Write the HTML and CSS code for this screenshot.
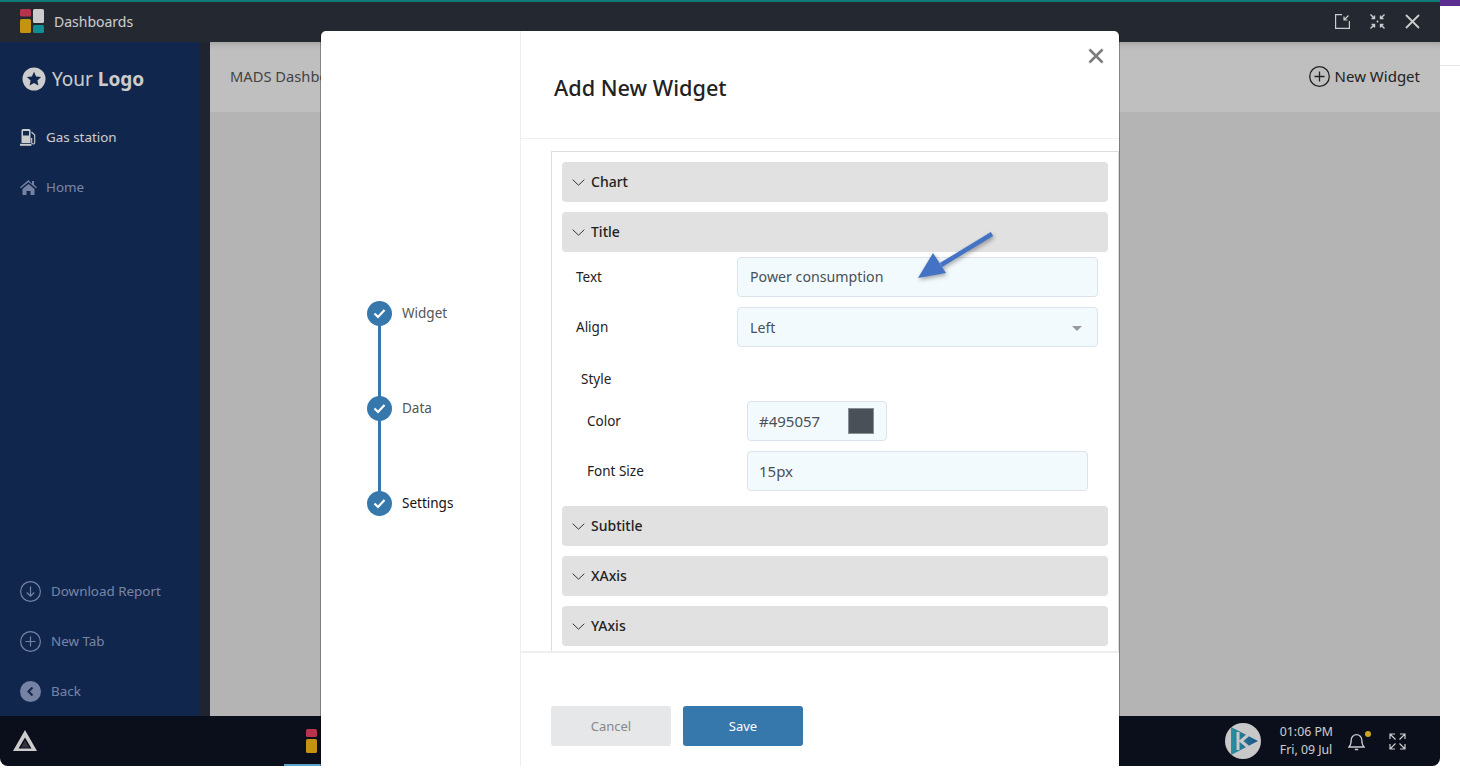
FILE: index.html
```html
<!DOCTYPE html>
<html lang="en">
<head>
<meta charset="UTF-8">
<title>Dashboards</title>
<link rel="stylesheet" href="styles.css">
</head>
<body>
<div class="page-edge"></div>
<div class="window">
    <header class="titlebar">
        <svg class="app-logo" width="24" height="24" viewBox="0 0 24 24">
            <rect x="0" y="0" width="11" height="7.5" rx="1.5" fill="#e6415f"/>
            <rect x="13" y="0" width="11" height="14" rx="1.5" fill="#fff"/>
            <rect x="0" y="10" width="11" height="14" rx="1.5" fill="#f5b816"/>
            <rect x="13" y="16" width="11" height="8" rx="1.5" fill="#13b3b9"/>
        </svg>
        <span class="app-name">Dashboards</span>
        <div class="window-actions">
            <svg width="15" height="15" viewBox="0 0 15 15" fill="none" stroke="#fff" stroke-width="1.2">
                <path d="M7 .6H.6v13.800h13.800V7"/>
                <path d="M13.500 1.500 9 6M9 2.500V6h3.500"/>
            </svg>
            <svg width="15" height="15" viewBox="0 0 15 15" fill="none" stroke="#fff" stroke-width="1.4">
                <path d="M.5.5l4 4M4.500 1.500v3h-3M14.500.5l-4 4M10.500 1.500v3h3M.5 14.500l4-4M4.500 13.500v-3h-3M14.500 14.500l-4-4M10.500 13.500v-3h3"/>
                <circle cx="7.500" cy="7.500" r="1" fill="#fff" stroke="none"/>
            </svg>
            <svg width="15" height="15" viewBox="0 0 15 15" fill="none" stroke="#fff" stroke-width="1.800">
                <path d="M1 1l13 13M14 1 1 14"/>
            </svg>
        </div>
    </header>

    <div class="workspace">
        <aside class="sidebar">
            <div class="brand">
                <svg width="24" height="24" viewBox="0 0 24 24">
                    <circle cx="12" cy="12" r="11.5" fill="#fff"/>
                    <path d="M12 4.800l2.100 4.600 5 .6-3.700 3.400 1 5L12 15.900l-4.400 2.500 1-5L4.900 10l5-.6z" fill="#163060"/>
                </svg>
                <span class="brand-text">Your <b>Logo</b></span>
            </div>
            <nav class="nav-top">
                <a class="nav-item active">
                    <svg width="17" height="17" viewBox="0 0 17 17" fill="#fff">
                        <path d="M1.500 1.500A1.500 1.500 0 0 1 3 0h6a1.500 1.500 0 0 1 1.500 1.500V14h-9zM3 2v4.500h6V2z"/>
                        <rect x="0" y="14.800" width="11.500" height="2"/>
                        <path d="M11.500 3l3.200 3v7.500a1.500 1.500 0 0 1-3 0V9.500h-1" fill="none" stroke="#fff" stroke-width="1.100"/>
                    </svg>
                    <span>Gas station</span>
                </a>
                <a class="nav-item">
                    <svg width="17" height="15" viewBox="0 0 17 15" fill="#94a3cc">
                        <path d="M8.500 0 0 7.300l.9 1L8.500 1.900l7.600 6.400.9-1-3-2.600V1h-2v2.900z"/>
                        <path d="M2.500 9 8.500 3.900 14.500 9v6h-4v-4h-4v4h-4z"/>
                    </svg>
                    <span>Home</span>
                </a>
            </nav>
            <nav class="nav-bottom">
                <a class="nav-item wide">
                    <svg width="21" height="21" viewBox="0 0 21 21" fill="none" stroke="#94a3cc" stroke-width="1.200">
                        <circle cx="10.500" cy="10.500" r="9.900"/>
                        <path d="M10.500 5.500v9.500M6.800 11.500l3.700 3.700 3.700-3.700"/>
                    </svg>
                    <span>Download Report</span>
                </a>
                <a class="nav-item wide">
                    <svg width="21" height="21" viewBox="0 0 21 21" fill="none" stroke="#94a3cc" stroke-width="1.200">
                        <circle cx="10.500" cy="10.500" r="9.900"/>
                        <path d="M10.500 5.500v10M5.500 10.500h10"/>
                    </svg>
                    <span>New Tab</span>
                </a>
                <a class="nav-item wide">
                    <svg width="21" height="21" viewBox="0 0 21 21">
                        <circle cx="10.500" cy="10.500" r="10.500" fill="#94a3cc"/>
                        <path d="M12.500 6.500l-4 4 4 4" fill="none" stroke="#163060" stroke-width="2"/>
                    </svg>
                    <span>Back</span>
                </a>
            </nav>
        </aside>
        <div class="sidebar-gap"></div>
        <main class="content">
            <div class="content-head">
                <span class="content-title">MADS Dashboard</span>
                <span class="new-widget">
                    <svg width="21" height="21" viewBox="0 0 21 21" fill="none" stroke="#2a2a2a" stroke-width="1.300">
                        <circle cx="10.500" cy="10.500" r="9.800"/>
                        <path d="M10.500 5.500v10M5.500 10.500h10"/>
                    </svg>
                    New Widget
                </span>
            </div>
        </main>
    </div>

    <footer class="taskbar">
        <svg class="start-icon" width="24" height="22" viewBox="0 0 24 22">
            <path d="M12 0 24 21H0z" fill="#fff"/>
            <path d="M12 7.500 18.500 18.500h-13z" fill="#0e1323"/>
            <path d="M12 10.500 16.200 17.500H7.800z" fill="#fff" opacity="0.200"/>
        </svg>
        <div class="task-app">
            <svg width="37" height="24" viewBox="0 0 37 24">
                <rect x="22" y="0" width="11" height="8" rx="1.500" fill="#e6415f"/>
                <rect x="22" y="10" width="11" height="14" rx="1.500" fill="#f5b816"/>
            </svg>
        </div>
        <div class="tray">
            <svg width="36" height="36" viewBox="0 0 36 36">
                <defs>
                    <linearGradient id="trayLogo" x1="0" y1="0" x2="1" y2="0">
                        <stop offset="0" stop-color="#37b4c8"/>
                        <stop offset="1" stop-color="#2368a8"/>
                    </linearGradient>
                </defs>
                <circle cx="18" cy="18" r="18" fill="#fbfbfb"/>
                <path d="M6 4 33 18 6 32z" fill="url(#trayLogo)"/>
                <path d="M13 9v18M23 12l-7 6 7 6" fill="none" stroke="#fbfbfb" stroke-width="3"/>
            </svg>
            <div class="clock">
                <div>01:06 PM</div>
                <div>Fri, 09 Jul</div>
            </div>
            <div class="bell">
                <svg width="17" height="19" viewBox="0 0 17 19" fill="none" stroke="#fff" stroke-width="1.300">
                    <path d="M1 15h15c-1.800-1.800-2.200-3.500-2.200-7A5.300 5.300 0 0 0 3.200 8c0 3.500-.4 5.200-2.200 7z"/>
                    <path d="M6.800 17.500h3.400" stroke-width="1.600"/>
                </svg>
                <span class="bell-dot"></span>
            </div>
            <svg width="17" height="17" viewBox="0 0 17 17" fill="none" stroke="#fff" stroke-width="1.200">
                <path d="M1 6V1h5M1 1l5.500 5.500M11 1h5v5M16 1l-5.500 5.500M1 11v5h5M1 16l5.500-5.500M11 16h5v-5M16 16l-5.500-5.500"/>
            </svg>
        </div>
    </footer>

    <div class="overlay"></div>
</div>

<section class="modal">
    <div class="steps">
        <div class="step">
            <span class="step-dot"><svg width="13" height="11" viewBox="0 0 13 11"><path d="M1.500 5.500 5 9l6.500-7" fill="none" stroke="#fff" stroke-width="2.200"/></svg></span>
            <span class="step-label">Widget</span>
        </div>
        <div class="step">
            <span class="step-dot"><svg width="13" height="11" viewBox="0 0 13 11"><path d="M1.500 5.500 5 9l6.500-7" fill="none" stroke="#fff" stroke-width="2.200"/></svg></span>
            <span class="step-label">Data</span>
        </div>
        <div class="step current">
            <span class="step-dot"><svg width="13" height="11" viewBox="0 0 13 11"><path d="M1.500 5.500 5 9l6.500-7" fill="none" stroke="#fff" stroke-width="2.200"/></svg></span>
            <span class="step-label">Settings</span>
        </div>
    </div>

    <div class="modal-main">
        <div class="modal-head">
            <h2>Add New Widget</h2>
            <svg class="modal-close" width="16" height="16" viewBox="0 0 16 16" fill="none" stroke="#7c7c7c" stroke-width="2.600">
                <path d="M1.500 1.500l13 13M14.500 1.500l-13 13"/>
            </svg>
        </div>

        <div class="modal-body">
            <div class="panel">
                <div class="acc-head">
                    <svg width="13" height="7" viewBox="0 0 13 7"><path d="M.7.7l5.800 5.500L12.300.7" fill="none" stroke="#333" stroke-width="1"/></svg>
                    <span>Chart</span>
                </div>
                <div class="acc-head">
                    <svg width="13" height="7" viewBox="0 0 13 7"><path d="M.7.7l5.800 5.500L12.300.7" fill="none" stroke="#333" stroke-width="1"/></svg>
                    <span>Title</span>
                </div>
                <div class="fields">
                    <div class="field">
                        <label>Text</label>
                        <input class="input input-title" type="text" value="Power consumption">
                    </div>
                    <div class="field">
                        <label>Align</label>
                        <div class="input select">Left<span class="caret"></span></div>
                    </div>
                    <div class="style-label">Style</div>
                    <div class="field sub">
                        <label>Color</label>
                        <div class="input color-input">#495057<span class="swatch"></span></div>
                    </div>
                    <div class="field sub">
                        <label>Font Size</label>
                        <input class="input" type="text" value="15px">
                    </div>
                </div>
                <div class="acc-head">
                    <svg width="13" height="7" viewBox="0 0 13 7"><path d="M.7.7l5.800 5.500L12.300.7" fill="none" stroke="#333" stroke-width="1"/></svg>
                    <span>Subtitle</span>
                </div>
                <div class="acc-head">
                    <svg width="13" height="7" viewBox="0 0 13 7"><path d="M.7.7l5.800 5.500L12.300.7" fill="none" stroke="#333" stroke-width="1"/></svg>
                    <span>XAxis</span>
                </div>
                <div class="acc-head">
                    <svg width="13" height="7" viewBox="0 0 13 7"><path d="M.7.7l5.800 5.500L12.300.7" fill="none" stroke="#333" stroke-width="1"/></svg>
                    <span>YAxis</span>
                </div>
            </div>
        </div>

        <div class="modal-foot">
            <button class="btn btn-cancel">Cancel</button>
            <button class="btn btn-save">Save</button>
        </div>
    </div>

    <!-- annotation arrow -->
    <svg class="arrow" width="90" height="60" viewBox="0 0 90 60">
        <path d="M79 5 28 36" stroke="#4472c4" stroke-width="4.500" fill="none"/>
        <path d="M5 49 20 24 33 44z" fill="#4472c4"/>
    </svg>
</section>
</body>
</html>
```

FILE: styles.css
```css
* {
    box-sizing: border-box;
}
html, body {
    margin: 0;
    height: 775px;
    overflow: hidden;
    background-color: #fff;
}
body {
    position: relative;
    font-family: "Noto Sans", Arial, sans-serif;
    font-size: 14px;
    color: #222;
}

/* what shows beside the window */
.page-edge {
    position: absolute;
    top: 0;
    left: 1440px;
    width: 20px;
    height: 66px;
    border-top: 6px solid #5b2d91;
    border-bottom: 1px solid #e6e6e6;
}

.window {
    position: relative;
    width: 1440px;
    height: 766px;
    display: flex;
    flex-direction: column;
    border-radius: 0 0 8px 8px;
    overflow: hidden;
}

/* title bar */
.titlebar {
    height: 42px;
    flex-shrink: 0;
    display: flex;
    align-items: center;
    padding: 0 20px 2px;
    background-color: #2e333e;
    border-top: 2px solid #139a98;
}
.app-logo {
    margin-right: 10px;
}
.app-name {
    font-size: 14px;
    color: #fff;
}
.window-actions {
    margin-left: auto;
    display: flex;
    gap: 20px;
}

/* sidebar + content */
.workspace {
    flex: 1;
    display: flex;
    min-height: 0;
}
.sidebar {
    width: 200px;
    display: flex;
    flex-direction: column;
    background-color: #163060;
    padding: 25px 0 0 20px;
}
.sidebar-gap {
    width: 10px;
    background-color: #272d3c;
}
.brand {
    display: flex;
    align-items: center;
    gap: 6px;
    height: 24px;
    padding-left: 2px;
    color: #fff;
}
.brand-text {
    font-size: 19px;
}
.nav-top {
    margin-top: 36px;
    display: flex;
    flex-direction: column;
    gap: 30px;
}
.nav-bottom {
    margin-top: auto;
    padding-bottom: 15px;
    display: flex;
    flex-direction: column;
    gap: 30px;
}
.nav-item {
    height: 20px;
    display: flex;
    align-items: center;
    gap: 9px;
    font-size: 13.4px;
    color: #98a7d2;
}
.nav-item.active {
    color: #fff;
}
.nav-item.wide {
    gap: 10px;
}
.content {
    flex: 1;
    background-color: #e2e2e2;
}
.content-head {
    height: 70px;
    display: flex;
    align-items: center;
    justify-content: space-between;
    padding: 0 20px 2px;
    background-color: #efefef;
    box-shadow: inset 0 8px 8px -8px rgba(0, 0, 0, 0.25);
}
.content-title {
    font-size: 14.7px;
    color: #555;
}
.new-widget {
    display: flex;
    align-items: center;
    gap: 5px;
    font-size: 15px;
    color: #2a2a2a;
}

/* taskbar */
.taskbar {
    height: 50px;
    flex-shrink: 0;
    display: flex;
    align-items: center;
    padding-left: 13px;
    background-color: #0e1323;
}
.task-app {
    margin-left: 247px;
    width: 37px;
    height: 50px;
    padding-top: 13px;
    border-bottom: 2px solid #72d0fa;
}
.tray {
    margin-left: auto;
    display: flex;
    align-items: center;
    padding-right: 34px;
}
.clock {
    margin-left: 19px;
    font-size: 12.3px;
    line-height: 18px;
    color: #fff;
}
.bell {
    position: relative;
    margin-left: 15px;
    margin-right: 24px;
    height: 19px;
}
.bell-dot {
    position: absolute;
    top: -1px;
    right: -6px;
    width: 6px;
    height: 6px;
    border-radius: 50%;
    background-color: #ffd028;
}

/* dims everything under the dialog */
.overlay {
    position: absolute;
    inset: 0;
    background-color: rgba(0, 0, 0, 0.2);
}

/* dialog */
.modal {
    position: absolute;
    top: 31px;
    left: 321px;
    width: 798px;
    height: 735px;
    display: flex;
    background-color: #fff;
    border-radius: 5px 5px 0 0;
    box-shadow: 1px 0 0 rgba(0, 0, 0, 0.3), -1px 0 0 rgba(0, 0, 0, 0.3);
}
.steps {
    width: 200px;
    flex-shrink: 0;
    border-right: 1px solid #eee;
    padding: 270px 0 0 46px;
}
.step {
    position: relative;
    height: 95px;
    display: flex;
    gap: 10px;
}
.step:last-child {
    height: 25px;
}
.step::after {
    content: "";
    position: absolute;
    top: 20px;
    left: 11px;
    width: 3px;
    height: 80px;
    background-color: #3677ac;
}
.step:last-child::after {
    display: none;
}
.step-dot {
    position: relative;
    z-index: 1;
    width: 25px;
    height: 25px;
    flex-shrink: 0;
    display: flex;
    align-items: center;
    justify-content: center;
    border-radius: 50%;
    background-color: #3677ac;
}
.step-label {
    line-height: 25px;
    font-size: 13.5px;
    color: #555;
}
.step.current .step-label {
    color: #111;
}
.modal-main {
    flex: 1;
    min-width: 0;
    display: flex;
    flex-direction: column;
}
.modal-head {
    position: relative;
    height: 108px;
    flex-shrink: 0;
    padding: 40px 0 0 33px;
    border-bottom: 1px solid #f0f0f0;
}
.modal-head h2 {
    margin: 0;
    font-size: 21.7px;
    font-weight: 500;
    line-height: 34px;
    color: #222;
}
.modal-close {
    position: absolute;
    top: 17px;
    right: 15px;
}
.modal-body {
    height: 514px;
    flex-shrink: 0;
    padding: 12px 0 0 30px;
    border-bottom: 2px solid #eee;
    overflow: hidden;
}
.panel {
    height: 500px;
    padding: 10px 10px 0 10px;
    border-top: 1px solid #ddd;
    border-left: 1px solid #ddd;
    border-right: 1px solid #ddd;
    overflow: hidden;
}
.acc-head {
    height: 40px;
    display: flex;
    align-items: center;
    gap: 6px;
    padding-left: 10px;
    margin-bottom: 10px;
    border-radius: 4px;
    background-color: #e1e1e1;
    font-size: 14px;
    font-weight: 500;
    color: #222;
}
.acc-head span {
    margin-bottom: 2px;
}
.fields {
    margin-top: -5px;
    margin-bottom: 15px;
    padding-left: 14px;
}
.field {
    display: flex;
    align-items: center;
    margin-bottom: 10px;
}
.field label {
    width: 161px;
    flex-shrink: 0;
    font-size: 13.5px;
    color: #222;
}
.field .input {
    width: 361px;
}
.field.sub {
    padding-left: 11px;
}
.field.sub label {
    width: 160px;
}
.field.sub .input {
    width: 341px;
    padding-left: 11px;
    font-size: 15px;
}
.style-label {
    padding-left: 5px;
    margin: 22px 0 12px;
    font-size: 13.5px;
    line-height: 20px;
}
.input {
    height: 40px;
    display: flex;
    align-items: center;
    padding: 0 12px;
    border: 1px solid #dce3ea;
    border-radius: 4px;
    background-color: #f3fafe;
    font-family: inherit;
    font-size: 14.2px;
    color: #495057;
}
.input-title {
    padding-bottom: 2px;
}
.select {
    position: relative;
}
.caret {
    position: absolute;
    right: 15px;
    top: 18px;
    border-left: 5px solid transparent;
    border-right: 5px solid transparent;
    border-top: 5px solid #999;
}
.field.sub .color-input {
    width: 140px;
    justify-content: space-between;
    padding-right: 12px;
}
.swatch {
    width: 26px;
    height: 26px;
    background-color: #495057;
    border: 1px solid #8a8f96;
}
.modal-foot {
    flex: 1;
    display: flex;
    gap: 12px;
    padding: 53px 0 0 30px;
}
.btn {
    width: 120px;
    height: 40px;
    border: none;
    border-radius: 3px;
    font-family: inherit;
    font-size: 13px;
}
.btn-cancel {
    background-color: #e6e7e9;
    color: #888;
}
.btn-save {
    background-color: #3677ac;
    color: #fff;
}
.arrow {
    position: absolute;
    top: 198px;
    left: 592px;
    filter: drop-shadow(1px 2px 2px rgba(0, 0, 0, 0.35));
}
```
